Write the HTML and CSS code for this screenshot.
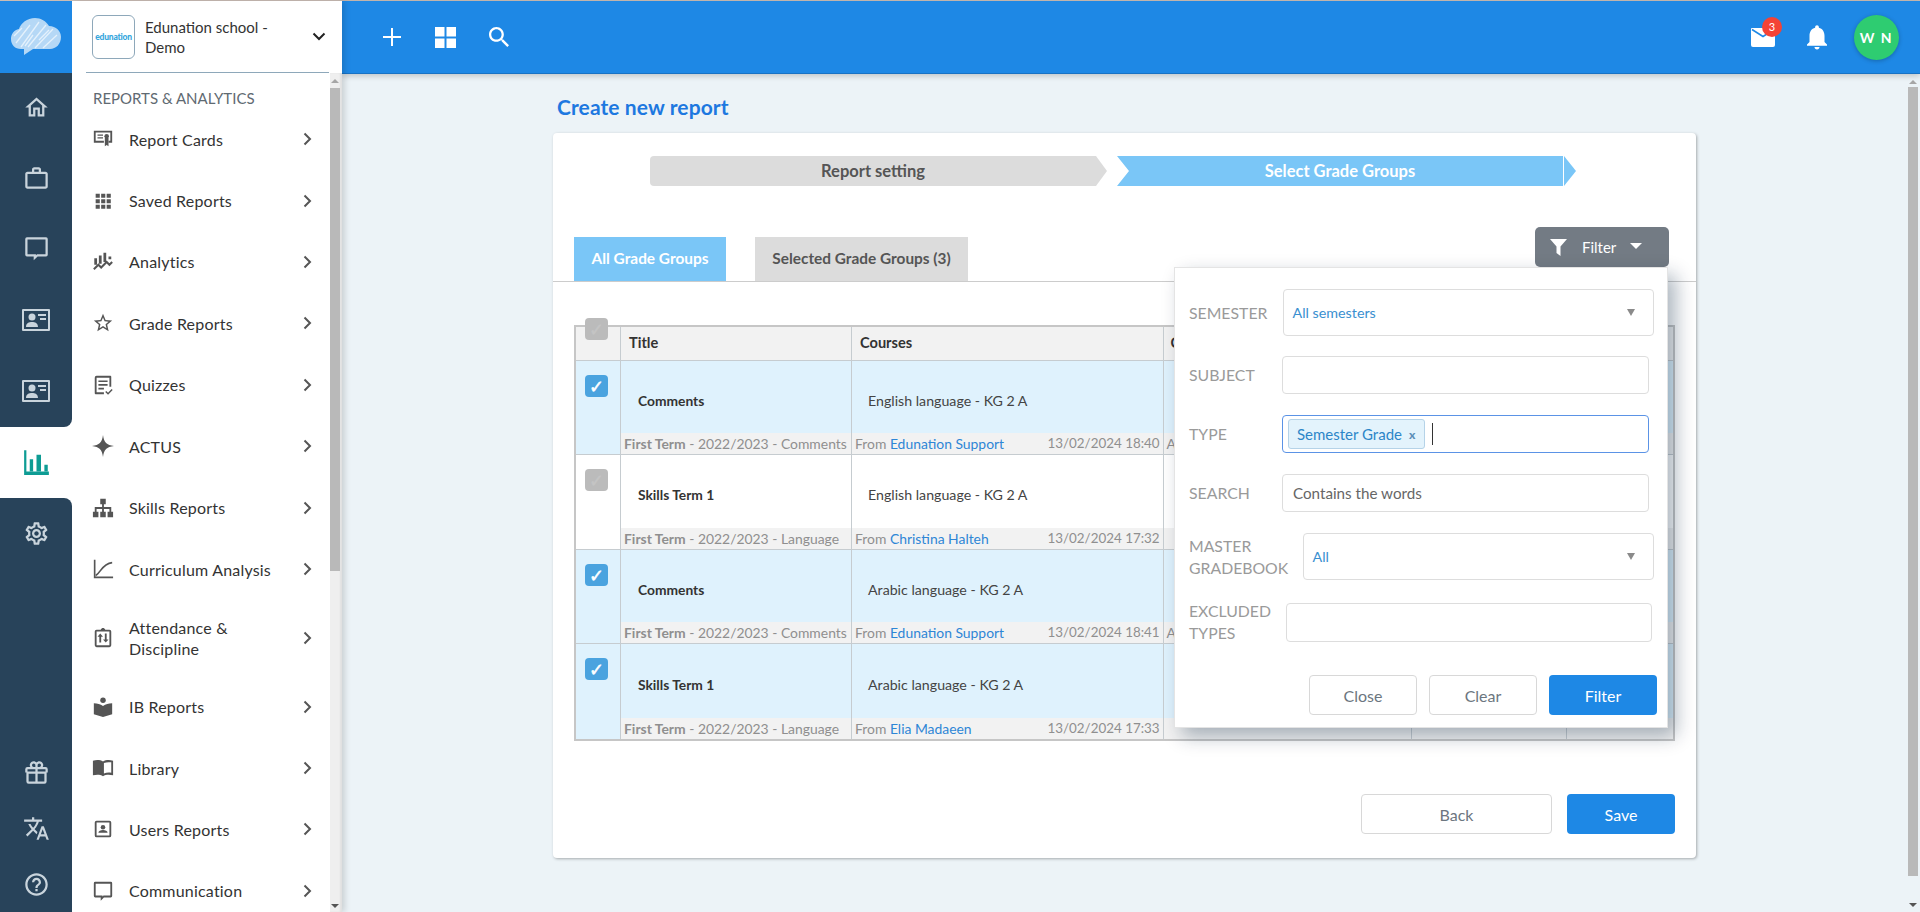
FILE: index.html
```html
<!DOCTYPE html>
<html lang="en">
<head>
<meta charset="utf-8">
<title>Create new report</title>
<link rel="stylesheet" href="styles.css">
</head>
<body>
<div class="strip"></div>
<div class="app">
  <nav class="rail">
    <div class="rail-logo">
      <svg width="50" height="38" viewBox="0 0 50 38"><path d="M10 31C4 31 0 27 0 21c0-5 3-9 8-10C10 5 16 0 24 0c6 0 11 3 14 8 7 0 12 5 12 11 0 7-5 12-11 12H22l-9 6v-6z" fill="#b5d8f6"/><path d="M5 25 19 7M10 29 28 4M17 29 35 7M24 30 42 11M32 30 46 17M3 18 11 10M14 28 22 17M28 22 38 12" stroke="#e4f1fc" stroke-width="1.300" fill="none"/></svg>
    </div>
    <div class="rail-top">
      <a class="rail-item"><svg class="rail-ic" viewBox="0 0 24 24"><path d="M12 5.69l5 4.5V18h-2v-6H9v6H7v-7.81l5-4.5M12 3L2 12h3v8h6v-6h2v6h6v-8h3L12 3z"/></svg></a>
      <a class="rail-item"><svg class="rail-ic" viewBox="0 0 24 24"><path d="M14 6V4h-4v2h4zM4 8v11h16V8H4zm16-2c1.11 0 2 .89 2 2v11c0 1.11-.89 2-2 2H4c-1.11 0-2-.89-2-2l.01-11c0-1.11.88-2 1.99-2h4V4c0-1.11.89-2 2-2h4c1.11 0 2 .89 2 2v2h4z"/></svg></a>
      <a class="rail-item"><svg class="rail-ic" viewBox="0 0 24 24"><path d="M3.500 2h17A1.500 1.500 0 0 1 22 3.500v14a1.500 1.500 0 0 1-1.500 1.500H13l-3.500 3.500V19h-6A1.500 1.500 0 0 1 2 17.500v-14A1.500 1.500 0 0 1 3.500 2zM4 4v13h7.500v1l1-1H20V4z" fill-rule="evenodd"/></svg></a>
      <a class="rail-item"><svg class="rail-card" viewBox="0 0 28 22"><path d="M1 0h26a1 1 0 0 1 1 1v20a1 1 0 0 1-1 1H1a1 1 0 0 1-1-1V1a1 1 0 0 1 1-1zm1 2v18h24V2z" fill-rule="evenodd"/><circle cx="10" cy="8" r="3.500"/><path d="M4 18c0-4 3-5 6-5s6 1 6 5zM16 5h8v2h-8zM18 9h6v2h-6z"/></svg></a>
      <a class="rail-item"><svg class="rail-card" viewBox="0 0 28 22"><path d="M1 0h26a1 1 0 0 1 1 1v20a1 1 0 0 1-1 1H1a1 1 0 0 1-1-1V1a1 1 0 0 1 1-1zm1 2v18h24V2z" fill-rule="evenodd"/><circle cx="10" cy="8" r="3.500"/><path d="M4 18c0-4 3-5 6-5s6 1 6 5zM16 5h8v2h-8zM18 9h6v2h-6z"/></svg></a>
    </div>
    <a class="rail-item rail-active"><svg class="rail-ic" viewBox="0 0 24 24"><path d="M1 1h2v19h20v3H1z"/><path d="M6 9h3v11H6zM12 5h4v15h-4zM19 14h3v6h-3z"/></svg></a>
    <div class="rail-bottom">
      <a class="rail-item"><svg class="rail-ic" viewBox="0 0 24 24"><path d="M19.430 12.980c.04-.32.07-.64.07-.98 0-.34-.03-.66-.07-.98l2.110-1.650c.19-.15.24-.42.12-.64l-2-3.460c-.09-.16-.26-.25-.44-.25-.06 0-.12.01-.17.03l-2.490 1c-.52-.4-1.080-.73-1.690-.98l-.38-2.650C14.460 2.180 14.250 2 14 2h-4c-.25 0-.46.18-.49.42l-.38 2.650c-.61.25-1.170.59-1.690.98l-2.490-1c-.06-.02-.12-.03-.18-.03-.17 0-.34.09-.43.25l-2 3.460c-.13.22-.07.49.12.64l2.110 1.650c-.04.32-.07.65-.07.98 0 .33.03.66.07.98l-2.110 1.650c-.19.15-.24.42-.12.64l2 3.460c.09.16.26.25.44.25.06 0 .12-.01.17-.03l2.490-1c.52.4 1.080.73 1.690.98l.38 2.650c.03.24.24.42.49.42h4c.25 0 .46-.18.49-.42l.38-2.650c.61-.25 1.170-.59 1.690-.98l2.490 1c.06.02.12.03.18.03.17 0 .34-.09.43-.25l2-3.460c.12-.22.07-.49-.12-.64l-2.110-1.650zm-1.980-1.710c.04.31.05.52.05.73 0 .21-.02.43-.05.73l-.14 1.130.89.7 1.080.84-.7 1.210-1.270-.51-1.040-.42-.9.68c-.43.32-.84.56-1.250.73l-1.060.43-.16 1.130-.2 1.350h-1.400l-.19-1.350-.16-1.130-1.060-.43c-.43-.18-.83-.41-1.230-.71l-.91-.7-1.060.43-1.270.51-.7-1.210 1.080-.84.89-.7-.14-1.130c-.03-.31-.05-.54-.05-.74s.02-.43.05-.73l.14-1.130-.89-.7-1.080-.84.7-1.210 1.270.51 1.040.42.9-.68c.43-.32.84-.56 1.250-.73l1.060-.43.16-1.130.2-1.350h1.390l.19 1.350.16 1.130 1.060.43c.43.18.83.41 1.230.71l.91.7 1.060-.43 1.270-.51.7 1.210-1.070.85-.89.7.14 1.130zM12 8c-2.210 0-4 1.790-4 4s1.790 4 4 4 4-1.790 4-4-1.790-4-4-4zm0 6c-1.100 0-2-.9-2-2s.9-2 2-2 2 .9 2 2-.9 2-2 2z"/></svg></a>
      <div class="rail-lower">
        <a class="rail-small"><svg class="rail-ic" viewBox="0 0 24 24"><path d="M20 7h-2.500c.3-.5.5-1 .5-1.500C18 3.600 16.400 2 14.500 2c-1 0-1.900.5-2.500 1.200C11.400 2.500 10.500 2 9.500 2 7.600 2 6 3.600 6 5.500c0 .5.200 1 .5 1.500H4a2 2 0 0 0-2 2v3h1v8a2 2 0 0 0 2 2h14a2 2 0 0 0 2-2v-8h1V9a2 2 0 0 0-2-2zM14.500 4a1.500 1.500 0 0 1 0 3H13V5.500c0-.8.700-1.500 1.500-1.500zm-5 0c.8 0 1.500.7 1.500 1.500V7H9.500a1.500 1.500 0 0 1 0-3zM4 9h7v2H4zm1 4h6v7H5zm14 7h-6v-7h6zm1-9h-7V9h7z"/></svg></a>
        <a class="rail-small"><svg class="rail-ic" viewBox="0 0 24 24"><path d="M12.870 15.070l-2.540-2.510.03-.03c1.740-1.940 2.980-4.170 3.710-6.530H17V4h-7V2H8v2H1v1.990h11.170C11.500 7.920 10.440 9.750 9 11.350 8.070 10.320 7.300 9.190 6.690 8h-2c.73 1.630 1.730 3.170 2.980 4.560l-5.090 5.020L4 19l5-5 3.110 3.110.76-2.040zM18.500 10h-2L12 22h2l1.120-3h4.750L21 22h2l-4.500-12zm-2.620 7l1.620-4.330L19.120 17h-3.240z"/></svg></a>
        <a class="rail-small"><svg class="rail-ic" viewBox="0 0 24 24"><path d="M11 18h2v-2h-2v2zm1-16C6.480 2 2 6.480 2 12s4.480 10 10 10 10-4.480 10-10S17.520 2 12 2zm0 18c-4.410 0-8-3.590-8-8s3.590-8 8-8 8 3.590 8 8-3.590 8-8 8zm0-14c-2.210 0-4 1.790-4 4h2c0-1.100.9-2 2-2s2 .9 2 2c0 2-3 1.750-3 5h2c0-2.250 3-2.500 3-5 0-2.210-1.790-4-4-4z"/></svg></a>
      </div>
    </div>
  </nav>

  <aside class="side">
    <header class="org">
      <div class="org-logo">edunation</div>
      <div class="org-name">Edunation school - Demo</div>
      <svg class="org-chev" width="14" height="9" viewBox="0 0 14 9"><path d="M1.500 1.500 7 7l5.500-5.500" fill="none" stroke="#222" stroke-width="2"/></svg>
    </header>
    <div class="org-line"></div>
    <div class="side-body">
      <div class="side-list">
        <h2 class="side-title">REPORTS &amp; ANALYTICS</h2>
        <a class="item"><svg class="ic" viewBox="0 0 24 24"><path d="M2 3h20v13h-4v-2h2V5H4v9h9v2H2z"/><path d="M6 7h6v1.500H6zM6 10h6v1.500H6z"/><circle cx="16" cy="9" r="2.500"/><path d="M14 11h4v9l-2-1.500-2 1.500z"/></svg><span class="item-text">Report Cards</span><svg class="chev" viewBox="0 0 9 14"><path d="M1.500 1.500 7 7l-5.500 5.500"/></svg></a>
        <a class="item"><svg class="ic" viewBox="0 0 24 24"><path d="M4 4h4.500v4.500H4zM10 4h4.500v4.500H10zM16 4h4.500v4.500H16zM4 10h4.500v4.500H4zM10 10h4.500v4.500H10zM16 10h4.500v4.500H16zM4 16h4.500v4.500H4zM10 16h4.500v4.500H10zM16 16h4.500v4.500H16z"/></svg><span class="item-text">Saved Reports</span><svg class="chev" viewBox="0 0 9 14"><path d="M1.500 1.500 7 7l-5.500 5.500"/></svg></a>
        <a class="item"><svg class="ic" viewBox="0 0 24 24"><path d="M2.500 8h3v7h-3zM7.500 5h3v9h-3zM12.500 2h3v10h-3zM18 6h3v3h-3z"/><path d="M2 20l5-5 3 3 6-6 3 3 3-3" fill="none" stroke="#555" stroke-width="2.200"/></svg><span class="item-text">Analytics</span><svg class="chev" viewBox="0 0 9 14"><path d="M1.500 1.500 7 7l-5.500 5.500"/></svg></a>
        <a class="item"><svg class="ic" viewBox="0 0 24 24"><path d="M22 9.240l-7.190-.62L12 2 9.190 8.630 2 9.240l5.460 4.730L5.820 21 12 17.270 18.180 21l-1.630-7.030L22 9.240zM12 15.400l-3.760 2.270 1-4.280-3.320-2.880 4.380-.38L12 6.100l1.710 4.040 4.380.38-3.320 2.880 1 4.280L12 15.400z"/></svg><span class="item-text">Grade Reports</span><svg class="chev" viewBox="0 0 9 14"><path d="M1.500 1.500 7 7l-5.500 5.500"/></svg></a>
        <a class="item"><svg class="ic" viewBox="0 0 24 24"><path d="M5 2h15a1 1 0 0 1 1 1v11h-2V4H5v16h8v2H4a1 1 0 0 1-1-1V4a2 2 0 0 1 2-2z"/><path d="M7 7h10v1.800H7zM7 11h10v1.800H7zM7 15h6v1.800H7z"/><path d="M15 19l2.500 2.500L22 17" fill="none" stroke="#555" stroke-width="1.600"/></svg><span class="item-text">Quizzes</span><svg class="chev" viewBox="0 0 9 14"><path d="M1.500 1.500 7 7l-5.500 5.500"/></svg></a>
        <a class="item"><svg class="ic" viewBox="0 0 24 24"><path d="M12 0C13 8 16 11 24 12 16 13 13 16 12 24 11 16 8 13 0 12 8 11 11 8 12 0z"/></svg><span class="item-text">ACTUS</span><svg class="chev" viewBox="0 0 9 14"><path d="M1.500 1.500 7 7l-5.500 5.500"/></svg></a>
        <a class="item"><svg class="ic" viewBox="0 0 24 24"><path d="M9 2h6v6h-2v3h8v5h2v6h-6v-6h2v-3h-6v3h2v6H9v-6h2v-3H5v3h2v6H1v-6h2v-5h8V8H9z"/></svg><span class="item-text">Skills Reports</span><svg class="chev" viewBox="0 0 9 14"><path d="M1.500 1.500 7 7l-5.500 5.500"/></svg></a>
        <a class="item"><svg class="ic" viewBox="0 0 24 24"><path d="M2 2h1.800v18.200H23V22H2z"/><path d="M4 19C9 17 11 6 22 5" fill="none" stroke="#555" stroke-width="1.800"/></svg><span class="item-text">Curriculum Analysis</span><svg class="chev" viewBox="0 0 9 14"><path d="M1.500 1.500 7 7l-5.500 5.500"/></svg></a>
        <a class="item item-two"><svg class="ic" viewBox="0 0 24 24"><path d="M9.500 3C10 1.500 11 1 12 1s2 .5 2.500 2H19a2 2 0 0 1 2 2v15a2 2 0 0 1-2 2H5a2 2 0 0 1-2-2V5a2 2 0 0 1 2-2zM5 5v15h14V5z" fill-rule="evenodd"/><path d="M9 7l3 3.500h-2V17H8v-6.500H6zM15 17l-3-3.500h2V7h2v6.500h2z"/></svg><span class="item-text">Attendance &amp; Discipline</span><svg class="chev" viewBox="0 0 9 14"><path d="M1.500 1.500 7 7l-5.500 5.500"/></svg></a>
        <a class="item"><svg class="ic" viewBox="0 0 24 24"><circle cx="12" cy="4.500" r="3"/><path d="M2 8c4 0 7 1 10 3 3-2 6-3 10-3v12l-10 3-10-3z"/></svg><span class="item-text">IB Reports</span><svg class="chev" viewBox="0 0 9 14"><path d="M1.500 1.500 7 7l-5.500 5.500"/></svg></a>
        <a class="item"><svg class="ic" viewBox="0 0 24 24"><path d="M1 4c4-1 8-1 11 1 3-2 7-2 11-1v16c-4-1-8-1-11 1-3-2-7-2-11-1zM13 6.500v11.500c2.500-1 5-1.200 8-.8V5.800c-3-.4-5.500-.2-8 .7z" fill-rule="evenodd"/></svg><span class="item-text">Library</span><svg class="chev" viewBox="0 0 9 14"><path d="M1.500 1.500 7 7l-5.500 5.500"/></svg></a>
        <a class="item"><svg class="ic" viewBox="0 0 24 24"><path d="M5 3h14a2 2 0 0 1 2 2v14a2 2 0 0 1-2 2H5a2 2 0 0 1-2-2V5a2 2 0 0 1 2-2zm0 2v14h14V5z" fill-rule="evenodd"/><circle cx="12" cy="10" r="2.500"/><path d="M7 16c0-2 2.500-3 5-3s5 1 5 3z"/></svg><span class="item-text">Users Reports</span><svg class="chev" viewBox="0 0 9 14"><path d="M1.500 1.500 7 7l-5.500 5.500"/></svg></a>
        <a class="item"><svg class="ic" viewBox="0 0 24 24"><path d="M3.500 2h17A1.500 1.500 0 0 1 22 3.500v14a1.500 1.500 0 0 1-1.500 1.500H13l-3.500 3.500V19h-6A1.500 1.500 0 0 1 2 17.500v-14A1.500 1.500 0 0 1 3.500 2zM4 4v13h7.500v1l1-1H20V4z" fill-rule="evenodd"/></svg><span class="item-text">Communication</span><svg class="chev" viewBox="0 0 9 14"><path d="M1.500 1.500 7 7l-5.500 5.500"/></svg></a>
      </div>
      <div class="sbar sbar-side"><span class="sbar-up"></span><span class="sbar-thumb sbar-thumb-side"></span><span class="sbar-down"></span></div>
    </div>
  </aside>

  <div class="main">
    <header class="topbar">
      <div class="top-left">
        <svg class="t-plus" viewBox="0 0 18 18"><path d="M8 0h2v8h8v2h-8v8H8v-8H0V8h8z"/></svg>
        <svg class="t-grid" viewBox="0 0 21 21"><path d="M0 0h9.500v9.500H0zM11.500 0H21v9.500h-9.500zM0 11.500h9.500V21H0zM11.500 11.500H21V21h-9.500z"/></svg>
        <svg class="t-search" viewBox="3 3 17.500 17.500"><path d="M15.500 14h-.79l-.28-.27C15.410 12.590 16 11.110 16 9.500 16 5.910 13.090 3 9.500 3S3 5.910 3 9.500 5.910 16 9.500 16c1.610 0 3.090-.59 4.230-1.570l.27.28v.79l5 4.990L20.490 19l-4.990-5zm-6 0C7.010 14 5 11.990 5 9.500S7.010 5 9.500 5 14 7.010 14 9.500 11.990 14 9.500 14z"/></svg>
      </div>
      <div class="top-right">
        <div class="mail">
          <svg class="t-mail" viewBox="0 0 24 19"><path d="M0 1a1 1 0 0 1 1-1h22a1 1 0 0 1 1 1v16a2 2 0 0 1-2 2H2a2 2 0 0 1-2-2z"/><path d="M1 1.500l11 7 11-7" fill="none" stroke="#1e88e5" stroke-width="1.500"/></svg>
          <span class="badge">3</span>
        </div>
        <svg class="t-bell" viewBox="0 0 24 24"><path d="M12 22c1.100 0 2-.9 2-2h-4c0 1.100.89 2 2 2zm6-6v-5c0-3.070-1.640-5.640-4.500-6.320V4c0-.83-.67-1.500-1.500-1.500s-1.500.67-1.500 1.500v.68C7.630 5.360 6 7.920 6 11v5l-2 2v1h16v-1l-2-2z"/></svg>
        <div class="avatar">W N</div>
      </div>
    </header>
    <div class="content">
      <div class="content-inner">
        <h1 class="page-title">Create new report</h1>
        <section class="card">
          <div class="steps">
            <div class="step step-done">Report setting</div>
            <div class="step step-on">Select Grade Groups</div>
            <div class="step-tip"></div>
          </div>
          <div class="tabs">
            <a class="tab tab-on">All Grade Groups</a>
            <a class="tab tab-off">Selected Grade Groups (3)</a>
            <div class="filter-wrap">
              <button class="filter-btn">
                <svg class="funnel" viewBox="0 0 17 17"><path d="M0 0h17l-6.500 7.500V17l-4-3V7.500z"/></svg>
                <span>Filter</span>
                <span class="caret"></span>
              </button>
              <div class="popup">
                <div class="f-row r-sem">
                  <label class="f-label l-sem">SEMESTER</label>
                  <div class="f-ctl f-sel c-sem"><span>All semesters</span><i class="tri"></i></div>
                </div>
                <div class="f-row">
                  <label class="f-label l-std">SUBJECT</label>
                  <div class="f-ctl c-std"></div>
                </div>
                <div class="f-row">
                  <label class="f-label l-std">TYPE</label>
                  <div class="f-ctl c-std f-focus"><span class="tag">Semester Grade<b class="tag-x">x</b></span><i class="cursor"></i></div>
                </div>
                <div class="f-row">
                  <label class="f-label l-std">SEARCH</label>
                  <div class="f-ctl c-std f-ph">Contains the words</div>
                </div>
                <div class="f-row r-master">
                  <label class="f-label l-master">MASTER GRADEBOOK</label>
                  <div class="f-ctl f-sel c-master"><span>All</span><i class="tri"></i></div>
                </div>
                <div class="f-row">
                  <label class="f-label l-excl">EXCLUDED TYPES</label>
                  <div class="f-ctl c-excl"></div>
                </div>
                <div class="f-actions">
                  <button class="btn btn-light">Close</button>
                  <button class="btn btn-light">Clear</button>
                  <button class="btn btn-primary">Filter</button>
                </div>
              </div>
            </div>
          </div>

          <div class="table">
            <div class="t-row t-head">
              <div class="t-cell"><span class="check check-off check-head">✓</span></div>
              <div class="t-cell t-h">Title</div>
              <div class="t-cell t-h">Courses</div>
              <div class="t-cell t-h t-h3">C</div>
              <div class="t-cell"></div>
              <div class="t-cell t-last"></div>
            </div>
            <div class="t-row t-sel r1">
              <div class="t-cell"><span class="check check-on">✓</span></div>
              <div class="t-cell t-body"><div class="t-main t-name">Comments</div><div class="t-meta"><b>First Term</b> - 2022/2023 - Comments</div></div>
              <div class="t-cell t-body"><div class="t-main t-course">English language - KG 2 A</div><div class="t-meta t-from"><span>From <a>Edunation Support</a></span><span class="t-date">13/02/2024 18:40</span></div></div>
              <div class="t-cell t-body"><div class="t-main"></div><div class="t-meta">A</div></div>
              <div class="t-cell t-body"><div class="t-main"></div><div class="t-meta"></div></div>
              <div class="t-cell t-body t-last"><div class="t-main"></div><div class="t-meta"></div></div>
            </div>
            <div class="t-row r2">
              <div class="t-cell"><span class="check check-off">✓</span></div>
              <div class="t-cell t-body"><div class="t-main t-name">Skills Term 1</div><div class="t-meta"><b>First Term</b> - 2022/2023 - Language</div></div>
              <div class="t-cell t-body"><div class="t-main t-course">English language - KG 2 A</div><div class="t-meta t-from"><span>From <a>Christina Halteh</a></span><span class="t-date">13/02/2024 17:32</span></div></div>
              <div class="t-cell t-body"><div class="t-main"></div><div class="t-meta"></div></div>
              <div class="t-cell t-body"><div class="t-main"></div><div class="t-meta"></div></div>
              <div class="t-cell t-body t-last"><div class="t-main"></div><div class="t-meta"></div></div>
            </div>
            <div class="t-row t-sel r3">
              <div class="t-cell"><span class="check check-on">✓</span></div>
              <div class="t-cell t-body"><div class="t-main t-name">Comments</div><div class="t-meta"><b>First Term</b> - 2022/2023 - Comments</div></div>
              <div class="t-cell t-body"><div class="t-main t-course">Arabic language - KG 2 A</div><div class="t-meta t-from"><span>From <a>Edunation Support</a></span><span class="t-date">13/02/2024 18:41</span></div></div>
              <div class="t-cell t-body"><div class="t-main"></div><div class="t-meta">A</div></div>
              <div class="t-cell t-body"><div class="t-main"></div><div class="t-meta"></div></div>
              <div class="t-cell t-body t-last"><div class="t-main"></div><div class="t-meta"></div></div>
            </div>
            <div class="t-row t-sel r4">
              <div class="t-cell"><span class="check check-on">✓</span></div>
              <div class="t-cell t-body"><div class="t-main t-name">Skills Term 1</div><div class="t-meta"><b>First Term</b> - 2022/2023 - Language</div></div>
              <div class="t-cell t-body"><div class="t-main t-course">Arabic language - KG 2 A</div><div class="t-meta t-from"><span>From <a>Elia Madaeen</a></span><span class="t-date">13/02/2024 17:33</span></div></div>
              <div class="t-cell t-body"><div class="t-main"></div><div class="t-meta"></div></div>
              <div class="t-cell t-body"><div class="t-main"></div><div class="t-meta"></div></div>
              <div class="t-cell t-body t-last"><div class="t-main"></div><div class="t-meta"></div></div>
            </div>
          </div>

          <div class="card-actions">
            <button class="btn btn-light btn-back">Back</button>
            <button class="btn btn-primary btn-save">Save</button>
          </div>
        </section>
      </div>
      <div class="sbar sbar-page"><span class="sbar-up"></span><span class="sbar-thumb sbar-thumb-page"></span><span class="sbar-down"></span></div>
    </div>
  </div>
</div>
</body>
</html>
```
FILE: styles.css
```css
* { box-sizing: border-box; }
html, body { margin: 0; padding: 0; height: 100%; overflow: hidden; }
body { font-family: "Lato", "Noto Sans", sans-serif; color: #333; background: #ecf3f7; }
button { font-family: inherit; }
h1, h2 { margin: 0; }

.strip { height: 1px; background: #c9bcb4; }
.app { display: flex; height: 911px; }

/* Rail */
.rail { width: 72px; flex: none; display: flex; flex-direction: column; background: #fff; position: relative; z-index: 3; }
.rail-logo { height: 72px; background: #1e88e5; display: flex; align-items: center; justify-content: center; }
.rail-top { background: #28435a; border-bottom-right-radius: 8px; }
.rail-bottom { flex: 1; background: #28435a; border-top-right-radius: 8px; display: flex; flex-direction: column; }
.rail-item { height: 71px; display: flex; align-items: center; justify-content: center; fill: #c9d4dc; flex: none; }
.rail-top .rail-item { height: 70.800px; padding-bottom: 2px; }
.rail-active { fill: #0e9c94; }
.rail-lower { margin-top: auto; }
.rail-small { height: 56px; display: flex; align-items: center; justify-content: center; fill: #c9d4dc; }
.rail-ic { width: 27px; height: 27px; }
.rail-card { width: 28px; height: 22px; }

/* Sidebar */
.side { width: 270px; flex: none; background: #fff; display: flex; flex-direction: column; position: relative; z-index: 2; box-shadow: 3px 0 6px rgba(0,0,0,.14); }
.org { height: 71px; display: flex; align-items: center; padding: 0 0 0 20px; }
.org-logo { width: 43px; height: 44px; border: 1px solid #8ea8ba; border-radius: 6px; display: flex; align-items: center; justify-content: center; font-size: 8.500px; font-weight: 900; color: #35a6dd; flex: none; letter-spacing: -.2px; }
.org-name { width: 155px; margin-left: 10px; font-size: 15px; line-height: 20px; color: #333; }
.org-chev { margin-left: 12px; }
.org-line { height: 1px; background: #8ea8ba; margin: 0 13px 0 14px; flex: none; }
.side-body { flex: 1; display: flex; min-height: 0; }
.side-list { flex: 1; overflow: hidden; padding-top: 14px; }
.side-title { font-size: 15px; font-weight: 400; color: #5f6a72; margin-left: 21px; line-height: 22px; height: 21.400px; }
.item { height: 61.450px; display: flex; align-items: center; padding: 0 18px 0 20px; color: #333; }
.item-two { height: 76px; }
.ic { width: 22px; height: 22px; fill: #555; flex: none; }
.item-text { font-size: 16px; letter-spacing: .2px; line-height: 21px; margin-left: 15px; flex: 1; }
.item-two .item-text { width: 120px; flex: none; margin-right: auto; }
.chev { width: 9px; height: 14px; fill: none; stroke: #555; stroke-width: 2; flex: none; }

/* Scrollbars */
.sbar { display: flex; flex-direction: column; align-items: center; flex: none; }
.sbar-side { width: 12px; background: #efefef; box-shadow: inset -2px 0 2px rgba(0,0,0,.06); }
.sbar-up { width: 0; height: 0; margin-top: 6px; border-left: 4px solid transparent; border-right: 4px solid transparent; border-bottom: 4px solid #a6a6a6; }
.sbar-side .sbar-up, .sbar-side .sbar-down { margin-right: 2px; }
.sbar-thumb { display: block; background: #b9b9b9; width: 10px; }
.sbar-thumb-side { height: 483px; margin: 5px 2px 0 0; }
.sbar-down { margin-top: auto; margin-bottom: 4px; width: 0; height: 0; border-left: 4px solid transparent; border-right: 4px solid transparent; border-top: 4px solid #555; }

/* Main */
.main { flex: 1; min-width: 0; display: flex; flex-direction: column; }
.topbar { height: 73px; flex: none; background: #1e88e5; border-bottom: 1px solid #1872c4; box-shadow: 0 2px 6px rgba(0,0,0,.2); display: flex; align-items: center; justify-content: space-between; position: relative; z-index: 1; padding: 0 21px 0 41px; }
.top-left, .top-right { display: flex; align-items: center; fill: #fff; }
.t-plus { width: 18px; height: 18px; }
.t-grid { width: 21px; height: 21px; margin-left: 34px; }
.t-search { width: 20px; height: 20px; margin-left: 33px; }
.mail { position: relative; width: 24px; height: 19px; }
.t-mail { width: 24px; height: 19px; display: block; }
.badge { position: absolute; left: 11px; top: -11px; width: 20px; height: 20px; border-radius: 50%; background: #f44336; color: #fff; font-size: 11px; display: flex; align-items: center; justify-content: center; }
.t-bell { width: 30px; height: 30px; margin-left: 27px; }
.avatar { width: 45px; height: 45px; margin-left: 22px; border-radius: 50%; background: #2ecc71; color: #fff; font-size: 14px; font-weight: 700; letter-spacing: 1.500px; display: flex; align-items: center; justify-content: center; box-shadow: 0 1px 4px rgba(0,0,0,.25); }

.content { flex: 1; display: flex; min-height: 0; }
.content-inner { flex: 1; min-width: 0; padding: 18px 0 0 211px; }
.page-title { font-size: 21px; letter-spacing: .1px; line-height: 30px; font-weight: 700; color: #1d78e0; margin: 0 0 11px 4px; height: 30px; }
.sbar-page { width: 15px; }
.sbar-thumb-page { height: 789px; margin: 3px 0 0; }
.sbar-page .sbar-down { margin-bottom: 5px; }

/* Card */
.card { width: 1143px; height: 725px; background: #fff; border-radius: 4px; box-shadow: 1px 1px 3px rgba(0,0,0,.3); padding-top: 23px; }
.steps { display: flex; margin-left: 97px; height: 30px; }
.step { height: 30px; display: flex; align-items: center; justify-content: center; font-size: 16.500px; font-weight: 700; }
.step-done { width: 457px; background: #dcdcdc; color: #555; padding-right: 11px; border-radius: 4px 0 0 4px; clip-path: polygon(0 0, 446px 0, 100% 50%, 446px 100%, 0 100%); }
.step-on { width: 446px; margin-left: 10px; background: #7ac6f7; color: #fff; clip-path: polygon(0 0, 100% 0, 100% 100%, 0 100%, 12px 50%); }
.step-tip { width: 12px; margin-left: 1px; background: #7ac6f7; clip-path: polygon(0 0, 100% 50%, 0 100%); }

.tabs { display: flex; height: 45px; margin-top: 51px; padding-left: 21px; border-bottom: 1px solid #ccc; }
.tab { height: 44px; padding-bottom: 2px; display: flex; align-items: center; justify-content: center; font-size: 15.400px; font-weight: 700; }
.tab-on { width: 152px; background: #7ac6f7; color: #fff; }
.tab-off { width: 213px; margin-left: 29px; background: #dcdcdc; color: #555; }
.filter-wrap { margin-left: auto; margin-right: 27px; margin-top: -10px; position: relative; height: 40px; }
.filter-btn { width: 134px; height: 40px; border: 0; border-radius: 5px; background: #737b84; color: #fff; font-size: 15px; display: flex; align-items: center; padding: 0 0 0 15px; }
.funnel { width: 17px; height: 17px; fill: #fff; margin-right: 15px; }
.caret { width: 0; height: 0; margin-left: 14px; margin-top: -3px; border-left: 6px solid transparent; border-right: 6px solid transparent; border-top: 6px solid #fff; }

/* Popup */
.popup { position: absolute; top: 40px; right: 1px; width: 494px; height: 461px; background: #fff; border: 1px solid #e4e4e4; padding: 21px 0 0 14px; box-shadow: 8px 8px 18px rgba(0,30,60,.32); z-index: 5; }
.f-row { display: flex; align-items: center; margin-bottom: 21px; }
.r-sem, .r-master { margin-bottom: 20px; }
.f-label { color: #9a9a9a; line-height: 22px; flex: none; font-size: 15.800px; }
.l-sem { width: 93.500px; }
.l-std { width: 93px; }
.l-master { width: 113.500px; }
.l-excl { width: 96.500px; }
.f-ctl { height: 38px; border: 1px solid #ddd; border-radius: 4px; background: #fff; display: flex; align-items: center; flex: none; }
.f-sel { height: 47px; padding: 0 18px 0 9px; color: #3a8fd0; font-size: 14.300px; justify-content: space-between; }
.c-sem { width: 371.500px; }
.c-std { width: 367px; }
.c-master { width: 351.500px; }
.c-excl { width: 366.500px; height: 39px; }
.f-focus { border-color: #5b93e6; padding-left: 5px; }
.f-ph { padding-left: 10px; color: #666; font-size: 15.200px; }
.tri { width: 0; height: 0; border-left: 4px solid transparent; border-right: 4px solid transparent; border-top: 7px solid #8a8a8a; }
.tag { height: 30px; width: 137px; display: flex; align-items: center; padding-left: 8px; background: #e3f3fc; border: 1px solid #b5d3e8; border-radius: 3px; color: #2c86c8; font-size: 15px; }
.tag-x { margin-left: 7px; font-size: 12px; font-weight: 900; color: #5c8fb8; }
.cursor { width: 1px; height: 22px; background: #333; margin-left: 7px; }
.f-actions { display: flex; justify-content: flex-end; gap: 12px; margin: 31px 10px 0 0; }
.btn { width: 108px; height: 40px; border-radius: 4px; font-size: 16px; }
.btn-light { background: #fff; border: 1px solid #d8d8d8; color: #6c7680; }
.btn-primary { background: #1e88e5; border: 0; color: #fff; }

/* Table */
.table { width: 1101px; margin: 43px 0 0 21px; border: 2px solid #c6c6c6; }
.t-row { display: grid; grid-template-columns: 45px 231px 311.600px 248px 155px 1fr; border-bottom: 1px solid #c6ccd0; background: #fff; position: relative; }
.t-row:last-child { border-bottom: 0; }
.t-head { height: 34px; background: #f2f2f2; }
.r1 { height: 94px; }
.r2 { height: 95px; }
.r3 { height: 94px; }
.r4 { height: 95px; }
.t-sel { background: #dff2fd; }
.t-cell { border-right: 1px solid #c6ccd0; min-width: 0; position: relative; display: flex; flex-direction: column; }
.t-last { border-right: 0; }
.t-h { padding: 0 0 2px 8px; justify-content: center; font-size: 14.600px; font-weight: 700; color: #333; }
.t-h3 { padding-left: 7px; }
.t-main { flex: 1; display: flex; align-items: center; font-size: 14.200px; color: #444; padding-top: 6px; }
.t-name { padding-left: 17px; font-weight: 700; color: #333; font-size: 13.800px; }
.t-course { padding-left: 16px; }
.t-meta { height: 21px; flex: none; background: #f2f2f2; padding: 0 3px 1px 3px; display: flex; align-items: center; font-size: 13.900px; color: #8f8f8f; white-space: pre; overflow: hidden; }
.t-meta b { font-weight: 700; }
.t-from { justify-content: space-between; }
.t-from a { color: #2e86d6; }
.t-date { font-size: 13.400px; }
.check { position: absolute; left: 9px; top: 14px; width: 23px; height: 22px; border-radius: 4px; display: flex; align-items: center; justify-content: center; font-family: "DejaVu Sans", sans-serif; font-size: 18px; -webkit-text-stroke: .5px currentColor; }
.check-on { background: #4aa3df; color: #fff; }
.check-off { background: #bbb; color: #c4c4c4; }
.check-head { top: -9px; }

.card-actions { display: flex; justify-content: flex-end; gap: 15px; margin: 53px 21px 0 0; }
.btn-back { width: 191px; }
```
